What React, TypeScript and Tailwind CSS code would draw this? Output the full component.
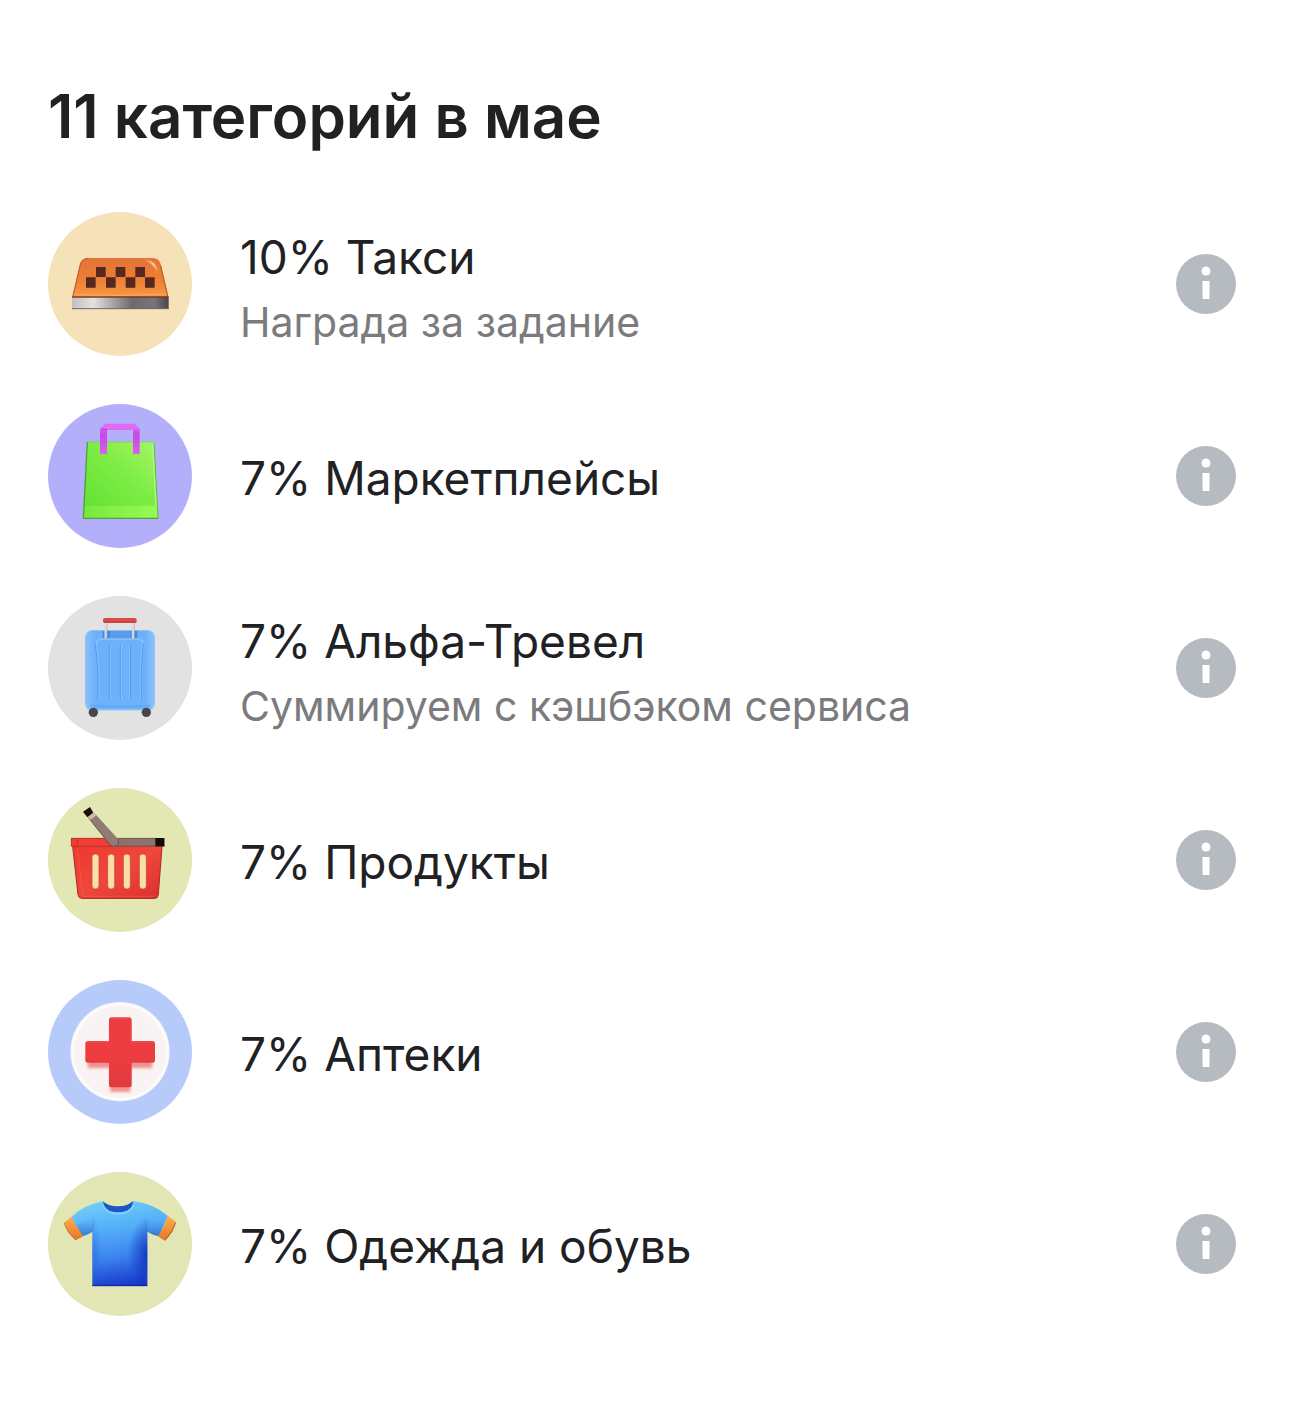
import type { ReactNode } from 'react';

type Category = {
  percent: number;
  name: string;
  note?: string;
  background: string;
  icon: ReactNode;
};

function TaxiIcon() {
  return (
    <>
      <defs>
        <linearGradient id="taxi-body" x1="0" y1="0" x2="0" y2="1">
          <stop offset="0" stopColor="#e2743a" />
          <stop offset="0.5" stopColor="#ee7d33" />
          <stop offset="1" stopColor="#f79a45" />
        </linearGradient>
        <linearGradient id="taxi-base" x1="0" y1="0" x2="1" y2="0">
          <stop offset="0" stopColor="#c4bfbd" />
          <stop offset="0.22" stopColor="#e4e1df" />
          <stop offset="0.62" stopColor="#6d6a6c" />
          <stop offset="0.85" stopColor="#77757a" />
          <stop offset="1" stopColor="#4c4346" />
        </linearGradient>
        <linearGradient id="taxi-shine" x1="0" y1="0" x2="1" y2="1">
          <stop offset="0" stopColor="#ffd9b8" stopOpacity="0.1" />
          <stop offset="0.5" stopColor="#ffe1c6" stopOpacity="0.8" />
          <stop offset="1" stopColor="#ffb57a" stopOpacity="0.1" />
        </linearGradient>
      </defs>
      <path d="M96 282 119 182Q124 162 144 162H338Q357 162 362 180L385 276V282Z" fill="url(#taxi-body)" />
      <path d="M98 280 121 183Q126 164 144 163" fill="none" stroke="#c4572a" strokeWidth="3" />
      <path d="M106 272Q240 278 378 270" fill="none" stroke="#ffb878" strokeWidth="3" opacity="0.6" />
      <path d="M318 168Q344 174 354 206" fill="none" stroke="url(#taxi-shine)" strokeWidth="8" strokeLinecap="round" />
      <path d="M362 185 383 276" stroke="#b3541f" strokeWidth="3" />
      <path d="M96 278H386V315H96Z" fill="url(#taxi-base)" />
      <path d="M96 279H386" stroke="#7d3b20" strokeWidth="4" />
      <path d="M96 314H386" stroke="#71686a" strokeWidth="3" />
      <path
        d="M168 189H197V219H168ZM227 189H256V219H227ZM286 189H315V219H286ZM138 220H167V251H138ZM198 220H227V251H198ZM257 220H286V251H257ZM315 220H344V251H315Z"
        fill="#572820"
      />
    </>
  );
}

function BagIcon() {
  return (
    <>
      <defs>
        <linearGradient id="bag-body" x1="1" y1="0" x2="0.2" y2="0.9">
          <stop offset="0" stopColor="#a8f46a" />
          <stop offset="0.5" stopColor="#7eed45" />
          <stop offset="1" stopColor="#67e238" />
        </linearGradient>
        <linearGradient id="bag-fold" x1="0" y1="0" x2="1" y2="0">
          <stop offset="0" stopColor="#78e83c" />
          <stop offset="1" stopColor="#98fa54" />
        </linearGradient>
        <linearGradient id="bag-handle" x1="0" y1="0" x2="0" y2="1">
          <stop offset="0" stopColor="#df66f2" />
          <stop offset="0.4" stopColor="#c54aea" />
          <stop offset="1" stopColor="#df5cf0" />
        </linearGradient>
      </defs>
      <path d="M142 137H342L355 368H129Z" fill="url(#bag-body)" />
      <path d="M132 329H352L355 368H129Z" fill="url(#bag-fold)" />
      <path d="M142 138 130 367H355" fill="none" stroke="#4fa044" strokeWidth="4" />
      <path d="M342 140 354 366" stroke="#58bd42" strokeWidth="3" />
      <path d="M338 143 348 330" stroke="#b9fb82" strokeWidth="4" opacity="0.8" />
      <path d="M142 138H342" stroke="#7ac55f" strokeWidth="2" />
      <path d="M180 174V99L196 83H284L299 99V174H279V102H201V174Z" fill="url(#bag-handle)" />
      <path d="M181 99 196 84H284L298 99L279 101H201Z" fill="#e06cf2" />
      <path d="M184 99 202 101" stroke="#b238d6" strokeWidth="3" />
    </>
  );
}

function SuitcaseIcon() {
  return (
    <>
      <defs>
        <linearGradient id="suitcase-body" x1="0" y1="0" x2="1" y2="0">
          <stop offset="0" stopColor="#8dc2fb" />
          <stop offset="0.14" stopColor="#6db0fc" />
          <stop offset="0.86" stopColor="#6db0fc" />
          <stop offset="1" stopColor="#8fc4fb" />
        </linearGradient>
      </defs>
      <rect x="135" y="127" width="210" height="240" rx="22" fill="url(#suitcase-body)" />
      <path d="M150 353Q240 360 330 353" fill="none" stroke="#5b9eed" strokeWidth="3" />
      <path d="M146 360Q156 365 170 365H310Q324 365 334 360" fill="none" stroke="#91c6fb" strokeWidth="3" />
      <circle cx="160" cy="373" r="14" fill="#44474e" />
      <circle cx="319" cy="373" r="14" fill="#44474e" />
      <path d="M188 129H292V153H188Z" fill="#4388dc" />
      <path d="M210 129H272V152H210Z" fill="#5a9cec" />
      <path d="M197 100V152M279 100V152" stroke="#d9dde3" strokeWidth="7" />
      <path d="M201 104V150M283 104V150" stroke="#a6adba" strokeWidth="2" />
      <path d="M166 168Q172 154 188 153H292Q307 154 314 168" fill="none" stroke="#8cc2fc" strokeWidth="4" />
      <path d="M166 165Q179 250 174 335M208 166V335M241 166V335M271 166V335M310 165Q300 250 304 335" fill="none" stroke="#5799ec" strokeWidth="3" />
      <path d="M169 165Q182 250 177 335M211 166V335M244 166V335M268 166V335M307 165Q297 250 301 335" fill="none" stroke="#92c7fe" strokeWidth="2" />
      <rect x="189" y="90" width="101" height="15" rx="5" fill="#d84c48" />
      <path d="M192 102H287" stroke="#b93c3d" strokeWidth="3" />
    </>
  );
}

function BasketIcon() {
  return (
    <>
      <defs>
        <linearGradient id="basket-body" x1="0" y1="0" x2="1" y2="1">
          <stop offset="0" stopColor="#ee382f" />
          <stop offset="0.5" stopColor="#ef473c" />
          <stop offset="1" stopColor="#dc2f2c" />
        </linearGradient>
      </defs>
      <path d="M98 198H366L355 345Q354 356 343 356H126Q116 356 114 346Z" fill="url(#basket-body)" />
      <path d="M98 200 114 344Q116 355 126 355H343Q354 355 355 344L366 200" fill="none" stroke="#a92925" strokeWidth="3" />
      <path d="M112 203 129 349H343" fill="none" stroke="#ff7566" strokeWidth="2" opacity="0.5" />
      <path d="M93 174H373V199H93Z" fill="#ed3f35" />
      <path d="M94 199H373M94 174V199M112 176V198" stroke="#ad2925" strokeWidth="2" />
      <path d="M93 175H222" stroke="#c9322d" strokeWidth="3" />
      <path d="M233 174H348V199H233Z" fill="#8d726c" />
      <path d="M233 175H348M233 198H348" stroke="#69504b" strokeWidth="2" />
      <path d="M346 174H373V199H346Z" fill="#120b0a" />
      <path d="M145 112 163 99 235 178Q241 192 229 199Q217 203 209 193Z" fill="#927b74" />
      <path d="M146 114 209 193Q218 203 230 198Q240 191 234 178" fill="none" stroke="#66504b" strokeWidth="3" />
      <path d="M145 112 163 99 169 106 151 120Z" fill="#dbb5aa" />
      <path d="M129 95 150 81 160 98 142 112Z" fill="#17100e" />
      <g fill="#f8dfa9" stroke="#c63b30" strokeWidth="2">
        <rect x="156" y="222" width="21" height="105" rx="10" />
        <rect x="203" y="222" width="21" height="105" rx="10" />
        <rect x="250" y="222" width="21" height="105" rx="10" />
        <rect x="298" y="222" width="21" height="105" rx="10" />
      </g>
    </>
  );
}

function PharmacyIcon() {
  return (
    <>
      <defs>
        <linearGradient id="pharmacy-cross" x1="0" y1="0" x2="0" y2="1">
          <stop offset="0" stopColor="#ea3c40" />
          <stop offset="0.5" stopColor="#ee3d40" />
          <stop offset="1" stopColor="#df3b40" />
        </linearGradient>
        <filter id="pharmacy-shadow" x="-20%" y="-20%" width="140%" height="140%">
          <feGaussianBlur stdDeviation="5" />
        </filter>
      </defs>
      <circle cx="240" cy="239" r="149" fill="#f3f1f8" />
      <circle cx="240" cy="239" r="142" fill="none" stroke="#fdfcfd" strokeWidth="8" />
      <circle cx="240" cy="239" r="138" fill="#f9f4f3" />
      <path
        d="M211 156H271V225H337V288H271V360H211V288H143V225H211Z"
        fill="#ed6f70"
        opacity="0.75"
        filter="url(#pharmacy-shadow)"
      />
      <path
        d="M215 136H267Q275 136 275 144V207H337Q345 207 345 215V264Q345 272 337 272H275V338Q275 346 267 346H215Q207 346 207 338V272H144Q136 272 136 264V215Q136 207 144 207H207V144Q207 136 215 136Z"
        fill="url(#pharmacy-cross)"
      />
      <path d="M213 139H269M142 210H207M275 210H339" stroke="#f26365" strokeWidth="2" strokeLinecap="round" />
    </>
  );
}

function ShirtIcon() {
  return (
    <>
      <defs>
        <linearGradient id="shirt-body" gradientUnits="userSpaceOnUse" x1="210" y1="112" x2="252" y2="370">
          <stop offset="0" stopColor="#70cbfb" />
          <stop offset="0.3" stopColor="#54b0f8" />
          <stop offset="0.65" stopColor="#3a82ee" />
          <stop offset="1" stopColor="#1635c7" />
        </linearGradient>
        <radialGradient id="shirt-shade-right" gradientUnits="userSpaceOnUse" cx="0" cy="0" r="1" gradientTransform="translate(326 270) scale(62 110)">
          <stop offset="0" stopColor="#0a28b8" stopOpacity="0.85" />
          <stop offset="1" stopColor="#0a28b8" stopOpacity="0" />
        </radialGradient>
        <radialGradient id="shirt-shade-left" gradientUnits="userSpaceOnUse" cx="0" cy="0" r="1" gradientTransform="translate(152 260) scale(34 110)">
          <stop offset="0" stopColor="#1b51cf" stopOpacity="0.45" />
          <stop offset="1" stopColor="#1b51cf" stopOpacity="0" />
        </radialGradient>
        <linearGradient id="shirt-sleeve" gradientUnits="userSpaceOnUse" x1="0" y1="150" x2="0" y2="217">
          <stop offset="0" stopColor="#56b4f3" stopOpacity="0" />
          <stop offset="1" stopColor="#2a68c4" stopOpacity="0.8" />
        </linearGradient>
        <linearGradient id="shirt-cuff" x1="0" y1="0" x2="0" y2="1">
          <stop offset="0" stopColor="#ffb14f" />
          <stop offset="1" stopColor="#e57325" />
        </linearGradient>
      </defs>
      <path
        d="M189 112Q132 122 94 159L123 217Q142 213 157 204V366H322V203Q340 214 357 216L384 156Q340 118 278 111Q262 137 234 137Q204 137 189 112Z"
        fill="url(#shirt-body)"
      />
      <path d="M110 180 123 217Q142 213 157 204L168 160Z" fill="url(#shirt-sleeve)" />
      <path d="M372 180 357 216Q340 214 322 203L308 160Z" fill="url(#shirt-sleeve)" />
      <path d="M157 150H322V366H157Z" fill="url(#shirt-shade-right)" />
      <path d="M157 150H322V366H157Z" fill="url(#shirt-shade-left)" />
      <path d="M94 158 72 176Q80 205 107 229L130 217Q110 190 94 158Z" fill="url(#shirt-cuff)" />
      <path d="M383 155 408 174Q400 205 375 230L353 217Q373 189 383 155Z" fill="url(#shirt-cuff)" />
      <path d="M72 177Q81 205 107 228" fill="none" stroke="#a76435" strokeWidth="2" />
      <path d="M407 176Q399 205 375 229" fill="none" stroke="#aa6227" strokeWidth="3" />
      <path d="M157 365H322" stroke="#0c22a0" strokeWidth="3" />
      <path d="M189 112Q203 127 234 127Q264 127 278 111Q281 132 258 141Q234 149 209 141Q191 132 189 112Z" fill="#1c55c5" />
      <path d="M188 124Q198 148 234 149Q272 148 281 122" fill="none" stroke="#81d4fd" strokeWidth="5" />
    </>
  );
}

const categories: Category[] = [
  { percent: 10, name: 'Такси', note: 'Награда за задание', background: 'bg-[#f6e2b8]', icon: <TaxiIcon /> },
  { percent: 7, name: 'Маркетплейсы', background: 'bg-[#b4affa]', icon: <BagIcon /> },
  { percent: 7, name: 'Альфа-Тревел', note: 'Суммируем с кэшбэком сервиса', background: 'bg-[#e2e2e2]', icon: <SuitcaseIcon /> },
  { percent: 7, name: 'Продукты', background: 'bg-[#e3e7b4]', icon: <BasketIcon /> },
  { percent: 7, name: 'Аптеки', background: 'bg-[#b7cbfb]', icon: <PharmacyIcon /> },
  { percent: 7, name: 'Одежда и обувь', background: 'bg-[#e2e5b4]', icon: <ShirtIcon /> },
];

function CategoryRow({ category }: { category: Category }) {
  return (
    <li className="flex items-center gap-12">
      <div className={`size-36 shrink-0 rounded-full ${category.background}`}>
        <svg viewBox="24 24 432 432" className="size-full" aria-hidden="true">
          {category.icon}
        </svg>
      </div>
      <div className="min-w-0 flex-1 pt-1">
        <p className="text-[46px] leading-[72px] text-[#212124]">
          {category.percent}% {category.name}
        </p>
        {category.note && <p className="text-[41px] leading-[58px] text-[#7b7b7e]">{category.note}</p>}
      </div>
      <button type="button" aria-label={`Подробнее: ${category.name}`} className="size-15 shrink-0 rounded-full bg-[#b6bbc1]">
        <svg viewBox="0 0 120 120" className="size-full" fill="#ffffff" aria-hidden="true">
          <circle cx="60" cy="34" r="9" />
          <path d="M53 54H67V90H53Z" />
        </svg>
      </button>
    </li>
  );
}

export default function App() {
  return (
    <main className="bg-white pt-20 pr-[54px] pb-22 pl-12 font-['Inter','Noto_Sans',sans-serif]">
      <h1 className="text-6xl leading-[72px] font-semibold text-[#212124]">11 категорий в мае</h1>
      <ul className="mt-15 flex flex-col gap-12">
        {categories.map((category) => (
          <CategoryRow key={category.name} category={category} />
        ))}
      </ul>
    </main>
  );
}
